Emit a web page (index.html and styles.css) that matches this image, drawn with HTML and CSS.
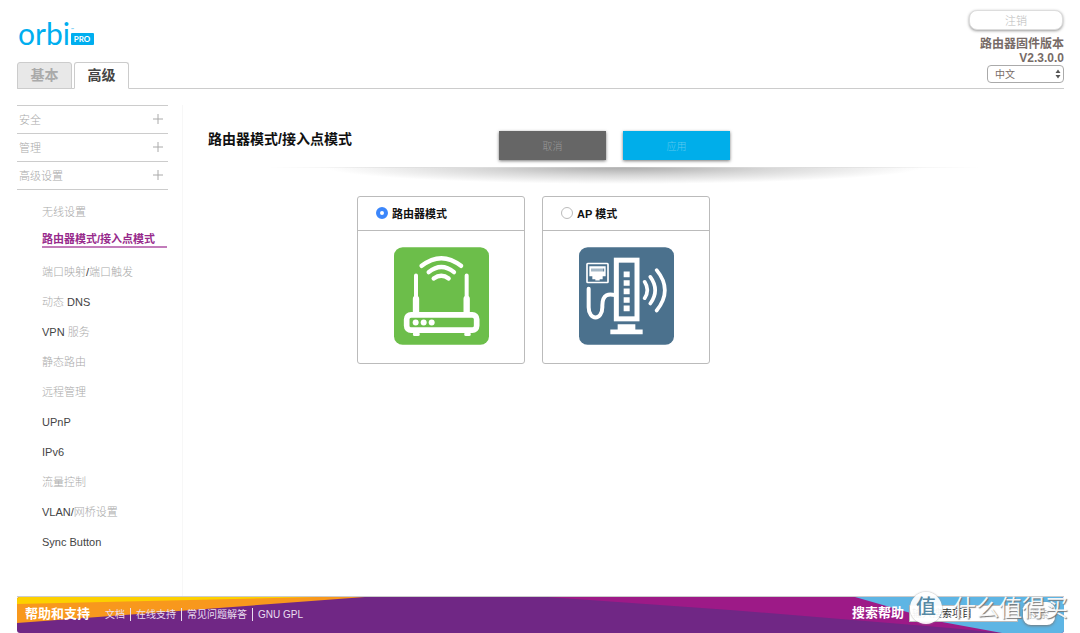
FILE: index.html
```html
<!DOCTYPE html>
<html lang="zh-CN">
<head>
<meta charset="utf-8">
<meta name="viewport" content="width=device-width, initial-scale=1">
<title>Orbi Pro</title>
<link rel="stylesheet" href="styles.css">
</head>
<body>
<header class="header">
  <div class="brand">
    <svg class="logo" viewBox="0 0 78 28" role="img" aria-label="orbi PRO">
      <text class="logo-word" x="-1" y="23">orbi</text>
      <text class="logo-tm" x="52" y="9">™</text>
      <rect class="logo-box" x="52" y="11" width="23" height="12" rx="1"/>
      <text class="logo-pro" x="63" y="20" text-anchor="middle">PRO</text>
    </svg>
    <nav class="tabs">
      <button class="tab" type="button">基本</button>
      <button class="tab tab-active" type="button">高级</button>
    </nav>
  </div>
  <div class="account">
    <button class="logout" type="button">注销</button>
    <div class="firmware">路由器固件版本<br>V2.3.0.0</div>
    <div class="lang">
      <select class="lang-select" aria-label="语言"><option>中文</option></select>
      <svg class="lang-arrows" viewBox="0 0 6 10"><path d="M3 0.5L5.5 4H0.5ZM3 9.5L5.5 6H0.5Z"/></svg>
    </div>
  </div>
</header>
<main class="main">
  <aside class="sidebar">
    <ul class="menu">
      <li><button class="menu-item" type="button">安全<svg class="plus" viewBox="0 0 10 10"><path d="M5 0V10M0 5H10"/></svg></button></li>
      <li><button class="menu-item" type="button">管理<svg class="plus" viewBox="0 0 10 10"><path d="M5 0V10M0 5H10"/></svg></button></li>
      <li><button class="menu-item" type="button">高级设置<svg class="plus" viewBox="0 0 10 10"><path d="M5 0V10M0 5H10"/></svg></button></li>
    </ul>
    <ul class="submenu">
      <li><a href="#">无线设置</a></li>
      <li class="current"><a href="#" aria-current="page">路由器模式/接入点模式</a></li>
      <li><a href="#">端口映射<span class="latin">/</span>端口触发</a></li>
      <li><a href="#">动态 <span class="latin">DNS</span></a></li>
      <li><a href="#"><span class="latin">VPN</span> 服务</a></li>
      <li><a href="#">静态路由</a></li>
      <li><a href="#">远程管理</a></li>
      <li><a href="#"><span class="latin">UPnP</span></a></li>
      <li><a href="#"><span class="latin">IPv6</span></a></li>
      <li><a href="#">流量控制</a></li>
      <li><a href="#"><span class="latin">VLAN/</span>网桥设置</a></li>
      <li><a href="#"><span class="latin">Sync Button</span></a></li>
    </ul>
  </aside>
  <section class="content">
    <div class="toolbar">
      <h1 class="title">路由器模式/接入点模式</h1>
      <div class="actions">
        <button class="action cancel" type="button">取消</button>
        <button class="action apply" type="button">应用</button>
      </div>
    </div>
    <div class="divider"></div>
    <div class="cards">
      <div class="card">
        <label class="card-head"><input class="radio" type="radio" name="mode" checked>路由器模式</label>
        <svg class="card-icon" viewBox="130 170 285 293">
          <rect x="130" y="170" width="285" height="293" rx="26" fill="#6cbe4a"/>
          <g fill="none" stroke="#fff" stroke-linecap="round">
            <path d="M213 226Q272 180 331 226" stroke-width="13"/>
            <path d="M234 245Q272 214 310 245" stroke-width="13"/>
            <path d="M249 264Q272 247 294 264" stroke-width="13"/>
            <path d="M196 255V325M348 255V325" stroke-width="12"/>
            <path d="M196 325V368M348 325V368" stroke-width="19"/>
            <rect x="168" y="373" width="210" height="46" rx="13" stroke-width="17"/>
            <path d="M192 431H202M346 431H355" stroke-width="11"/>
          </g>
          <g fill="#fff"><circle cx="195" cy="396" r="9"/><circle cx="219" cy="396" r="9"/><circle cx="243" cy="396" r="9"/></g>
        </svg>
      </div>
      <div class="card">
        <label class="card-head"><input class="radio" type="radio" name="mode">AP 模式</label>
        <svg class="card-icon" viewBox="145 170 285 293">
          <rect x="145" y="170" width="285" height="293" rx="26" fill="#4b718d"/>
          <g fill="none" stroke="#fff">
            <rect x="169" y="219" width="63" height="57" rx="2" stroke-width="5"/>
            <path d="M174 295V350C174 391 215 391 215 350V345C215 309 236 309 254 314" stroke-width="12" stroke-linecap="round"/>
            <rect x="257" y="209" width="62" height="176" stroke-width="15"/>
            <path d="M342 274Q358 299 342 323M359 259Q388 299 359 339M378 239Q427 299 378 360" stroke-width="11" stroke-linecap="round"/>
          </g>
          <path fill="#fff" d="M176 227H225V257H216V266H207V270H194V266H185V257H176Z"/>
          <path d="M184 234V243M190 234V243M196 234V243M202 234V243M208 234V243M214 234V243M219 234V243" stroke="#4b718d" stroke-width="3"/>
          <path fill="#fff" d="M279 243H297V260H279ZM279 269H297V286H279ZM279 294H297V311H279ZM279 320H297V337H279ZM279 345H297V362H279ZM261 401H314V417H336V431H239V417H261Z"/>
        </svg>
      </div>
    </div>
  </section>
</main>
<footer class="footer">
  <svg class="ribbon" viewBox="0 0 1047 36" preserveAspectRatio="none" aria-hidden="true">
    <rect width="1047" height="36" fill="#702785"/>
    <path d="M0 0H348L0 26Z" fill="#f8981d"/>
    <path d="M0 0H300L0 7Z" fill="#fdd000"/>
    <path d="M530 0H860L985 36L933 31L713 13Z" fill="#9d1a87"/>
    <path d="M838 0H1047V36H985L925 25Z" fill="#5eb5e4"/>
  </svg>
  <div class="help">
    <strong class="foot-title">帮助和支持</strong>
    <nav class="foot-links">
      <a href="#">文档</a><a href="#">在线支持</a><a href="#">常见问题解答</a><a href="#">GNU GPL</a>
    </nav>
  </div>
  <form class="search">
    <label class="foot-title" for="search">搜索帮助</label>
    <input class="search-box" id="search" type="text" placeholder="输入搜索项目">
    <button class="search-go" type="button">搜索</button>
  </form>
  <div class="watermark"><span class="mark">值</span>什么值得买</div>
</footer>
</body>
</html>
```

FILE: styles.css
```css
* { box-sizing: border-box; }
body {
  margin: 0;
  min-height: 100vh;
  padding: 0 16px 0 17px;
  display: flex;
  flex-direction: column;
  background: #fff;
  color: #555;
  font-family: "Liberation Sans", "Noto Sans CJK SC", sans-serif;
  font-size: 11px;
}
button, input, select { font-family: inherit; }
button { cursor: pointer; padding: 0; }
ul { list-style: none; margin: 0; padding: 0; }
a { color: inherit; text-decoration: none; }

.header {
  display: flex;
  justify-content: space-between;
  align-items: flex-end;
  height: 89px;
  border-bottom: 1px solid #ccc;
}
.logo { display: block; overflow: visible; width: 78px; height: 28px; margin: 0 0 12px 2px; }
.logo-word { font: 400 30px Lato, sans-serif; fill: #00aeef; }
.logo-tm { font: 4px Lato, sans-serif; fill: #00aeef; }
.logo-box { fill: #00aeef; }
.logo-pro { font: 700 8px Lato, sans-serif; fill: #fff; }
.tabs { display: flex; gap: 2px; margin-bottom: -1px; }
.tab {
  width: 55px;
  height: 27px;
  padding-bottom: 3px;
  border: 1px solid #ccc;
  border-radius: 3px 3px 0 0;
  background: #e8e8e8;
  color: #aaa;
  font-size: 14px;
  font-weight: 700;
}
.tab-active { background: #fff; border-bottom-color: #fff; color: #444; }

.account { display: flex; flex-direction: column; align-items: flex-end; padding-bottom: 5px; }
.logout {
  width: 94px;
  height: 20px;
  margin: 0 1px 7px 0;
  border: 1px solid #ddd;
  border-radius: 8px;
  background: #fff;
  box-shadow: 0 1px 3px #999;
  color: #bbb;
  font-size: 11px;
  font-weight: 300;
}
.firmware { color: #776b67; font-size: 12px; font-weight: 700; line-height: 14px; text-align: right; }
.lang { position: relative; display: flex; }
.lang-select {
  appearance: none;
  width: 77px;
  height: 18px;
  padding: 0 7px;
  border: 1px solid #aaa;
  border-radius: 4px;
  background: #fff;
  color: #776b67;
  font-size: 10px;
}
.lang-arrows { position: absolute; right: 3px; top: 4px; width: 6px; height: 10px; fill: #555; pointer-events: none; }

.main { flex: 1; display: flex; padding-top: 16px; }
.sidebar { width: 166px; padding-right: 14px; border-right: 1px solid #f7f7f7; }
.menu { border-top: 1px solid #ccc; }
.menu li { border-bottom: 1px solid #ccc; }
.menu-item {
  display: flex;
  justify-content: space-between;
  align-items: center;
  width: 100%;
  height: 27px;
  padding: 0 5px 2px 2px;
  border: 0;
  background: none;
  color: #aaa;
  font-size: 11px;
  font-weight: 300;
}
.plus { width: 10px; height: 10px; fill: none; stroke: #aaa; stroke-width: 1; }
.submenu { padding: 7px 1px 0 25px; color: #aaa; font-weight: 300; }
.submenu li { height: 30px; line-height: 30px; white-space: nowrap; }
.submenu .current {
  height: 21px;
  margin-bottom: 9px;
  border-bottom: 2px solid #c27cba;
  color: #972a8c;
  font-weight: 700;
  line-height: 24px;
}
.latin { color: #444; }

.content { flex: 1; padding-left: 25px; }
.toolbar { display: flex; align-items: flex-start; padding-top: 23px; }
.title { margin: 0 147px 0 0; color: #111; font-size: 14px; line-height: 23px; font-weight: 700; white-space: nowrap; }
.actions { display: flex; gap: 17px; padding-top: 3px; }
.action {
  width: 107px;
  height: 29px;
  border: 0;
  box-shadow: 0 1px 3px #777;
  font-size: 10px;
  font-weight: 300;
}
.cancel { background: #666; color: #999; }
.apply { background: #00aeea; color: #5cc8ee; }
.divider {
  height: 17px;
  margin: 7px 84px 0 60px;
  background:
    linear-gradient(90deg, #fff0, #ddd 30%, #bbb 50%, #ddd 70%, #fff0) top / 100% 1px no-repeat,
    radial-gradient(ellipse 42% 100% at 50% 0, #aaa, #d8d8d8 50%, #fff0 100%);
}
.cards { display: flex; gap: 17px; padding: 12px 0 0 149px; }
.card { width: 168px; height: 168px; border: 1px solid #bbb; border-radius: 3px; }
.card-head {
  display: flex;
  align-items: center;
  height: 34px;
  padding: 0 0 2px 18px;
  border-bottom: 1px solid #bbb;
  color: #111;
  font-size: 11px;
  font-weight: 700;
}
.radio {
  appearance: none;
  width: 12px;
  height: 12px;
  margin: 0 4px 0 0;
  border: 1px solid #bbb;
  border-radius: 50%;
  background: #fff;
}
.radio:checked { border: 4px solid #3b86fb; }
.card-icon { display: block; width: 95px; height: 98px; margin: 16px auto 0; }

.footer {
  position: relative;
  display: flex;
  justify-content: space-between;
  align-items: center;
  height: 37px;
  border-top: 1px solid #ccc;
  color: #fff;
}
.ribbon { position: absolute; left: 0; top: 0; width: 100%; height: 100%; border-radius: 3px; }
.help, .search { position: relative; display: flex; align-items: center; }
.help { padding: 0 0 2px 8px; }
.foot-title { font-size: 13px; font-weight: 700; line-height: 20px; }
.foot-links { display: flex; margin-left: 10px; color: #eadff0; font-size: 10px; line-height: 13px; }
.foot-links a { padding: 0 5px; }
.foot-links a + a { border-left: 1px solid #eadff0; }
.search { padding: 0 9px 4px 0; }
.search-box {
  width: 109px;
  height: 17px;
  margin: 0 5px;
  padding: 0 3px 0 2px;
  border: 1px solid #bbb;
  background: #fff;
  font-size: 10px;
}
.search-box::placeholder { color: #333; }
.search-go {
  width: 32px;
  height: 23px;
  border: 0;
  border-radius: 8px;
  background: #fff;
  box-shadow: 0 1px 3px #777;
  color: #bbb;
  font-size: 10px;
}
.watermark {
  position: absolute;
  right: -4px;
  top: -5px;
  display: flex;
  align-items: center;
  gap: 11px;
  color: #fffe;
  font-size: 23px;
  line-height: 28px;
  text-shadow: 1px 1px 1px #777;
  white-space: nowrap;
  pointer-events: none;
}
.mark {
  width: 32px;
  height: 32px;
  border-radius: 50%;
  background: #fffe;
  box-shadow: 0 0 2px #999;
  color: #5689a5;
  font-size: 20px;
  font-weight: 500;
  line-height: 30px;
  text-align: center;
  text-shadow: none;
}
```
